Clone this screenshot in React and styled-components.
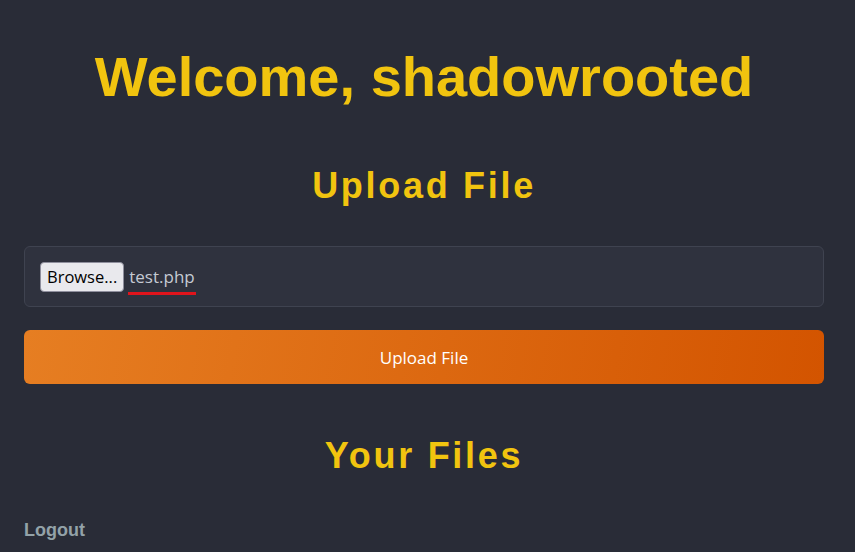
import React from 'react'
import styled, { createGlobalStyle } from 'styled-components'

const GlobalStyle = createGlobalStyle`
    html, body {
        margin: 0;
        padding: 0;
        background: #292c37;
    }
    body {
        font-family: "Liberation Sans", Arial, sans-serif;
        min-height: 552px;
    }
`

const Page = styled.div`
    padding: 45px 31px 0 24px;
    min-height: 552px;
    box-sizing: border-box;
`

const Title = styled.h1`
    margin: 0;
    text-align: center;
    font-size: 56px;
    line-height: 64px;
    font-weight: 700;
    color: #f1c40f;
`

const Heading = styled.h2`
    margin: ${props => props.top}px 0 0;
    text-align: center;
    font-size: 36px;
    line-height: 42px;
    font-weight: 700;
    letter-spacing: 2.7px;
    color: #f1c40f;
`

const FileBox = styled.div`
    margin-top: 39px;
    display: flex;
    align-items: center;
    gap: 4px;
    height: 61px;
    padding: 0 15px;
    box-sizing: border-box;
    background: #2f323e;
    border: 1px solid #3f4350;
    border-radius: 6px;
`

const BrowseButton = styled.button`
    height: 30px;
    padding: 0 6px;
    font-family: "Open Sans", "Noto Sans", sans-serif;
    font-size: 16.5px;
    color: #000;
    background: #e9e9ed;
    border: 1px solid #8f8f9d;
    border-radius: 4px;
`

const FileName = styled.span`
    position: relative;
    font-family: "Open Sans", "Noto Sans", sans-serif;
    font-size: 17px;
    color: #c5cad3;
    padding: 0 1px;

    &::after {
        content: '';
        position: absolute;
        left: 0;
        right: 0;
        bottom: -7px;
        height: 3px;
        background: #e0141c;
    }
`

const UploadButton = styled.button`
    display: block;
    width: 100%;
    margin-top: 23px;
    height: 54px;
    border: none;
    border-radius: 6px;
    background: linear-gradient(100deg, #e67e22 0%, #d35400 100%);
    color: #fff;
    font-family: "Open Sans", "Noto Sans", sans-serif;
    font-size: 17px;
`

const Logout = styled.a`
    display: block;
    margin-top: 43px;
    font-size: 18px;
    line-height: 21px;
    font-weight: 700;
    color: #93a2a8;
    text-decoration: none;
`

export default function App() {
    return (
        <>
            <GlobalStyle />
            <Page>
                <Title>Welcome, shadowrooted</Title>

                <Heading top={56}>Upload File</Heading>
                <FileBox>
                    <BrowseButton>Browse...</BrowseButton>
                    <FileName>test.php</FileName>
                </FileBox>
                <UploadButton>Upload File</UploadButton>

                <Heading top={51}>Your Files</Heading>

                <Logout href="#">Logout</Logout>
            </Page>
        </>
    )
}
